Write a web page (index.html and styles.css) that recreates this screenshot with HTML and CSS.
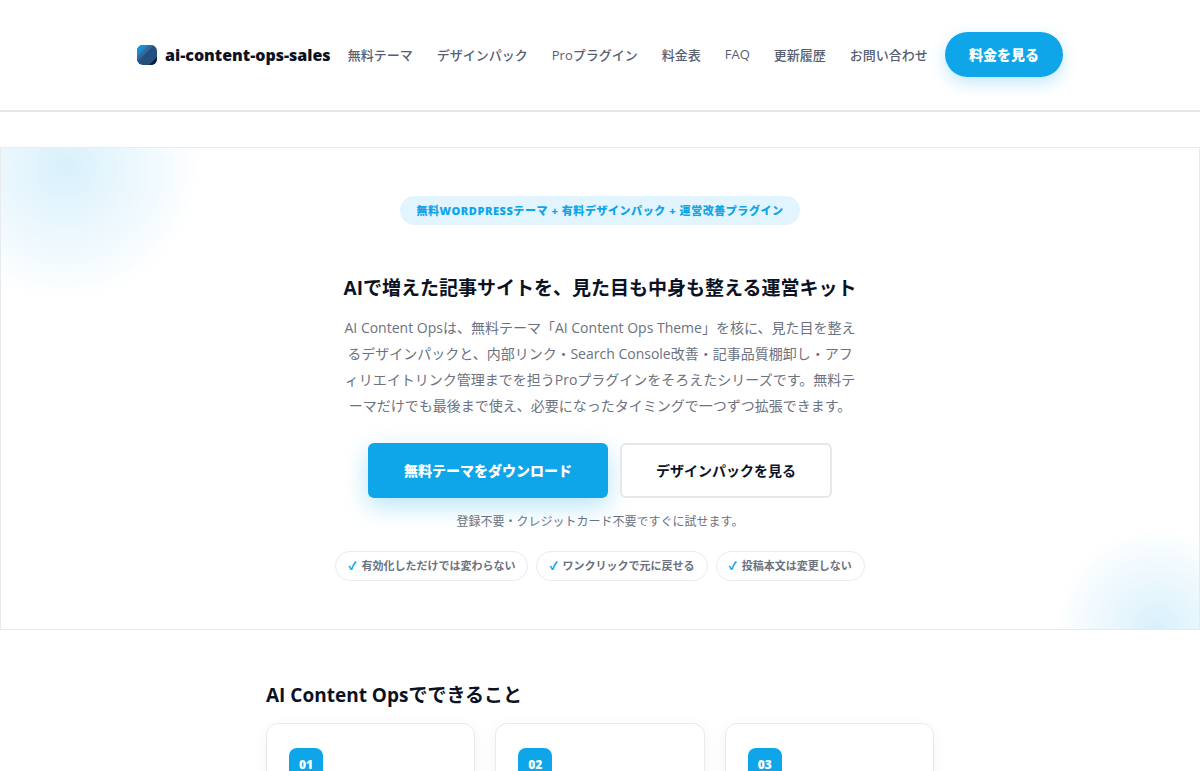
FILE: index.html
```html
<!DOCTYPE html>
<html lang="ja">
<head>
  <meta charset="UTF-8" />
  <meta name="viewport" content="width=device-width, initial-scale=1.0" />
  <title>ai-content-ops-sales</title>
  <link rel="stylesheet" href="styles.css">
</head>
<body>
  <header class="site-header">
    <div class="header-inner">
      <a href="#" class="brand">
        <svg class="brand-icon" viewBox="0 0 20 20" aria-hidden="true">
          <defs>
            <linearGradient id="brand-light" x1="0" y1="0" x2="1" y2="1">
              <stop offset="0" stop-color="#0ea5e9" />
              <stop offset="0.5" stop-color="#1c83c4" />
            </linearGradient>
            <clipPath id="brand-clip"><rect width="20" height="20" rx="6" /></clipPath>
          </defs>
          <g clip-path="url(#brand-clip)">
            <rect width="20" height="20" fill="#24507f" />
            <path d="M0 0h17L0 17z" fill="#35679a" />
            <path d="M0 0h12L0 12z" fill="url(#brand-light)" />
            <path d="M20 12v8h-8z" fill="#0f1d38" />
          </g>
        </svg>
        <span>ai-content-ops-sales</span>
      </a>
      <nav class="nav">
        <a href="#">無料テーマ</a>
        <a href="#">デザインパック</a>
        <a href="#">Proプラグイン</a>
        <a href="#">料金表</a>
        <a href="#">FAQ</a>
        <a href="#">更新履歴</a>
        <a href="#">お問い合わせ</a>
      </nav>
      <a href="#" class="header-cta">料金を見る</a>
    </div>
  </header>

  <main>
    <!-- Hero -->
    <section class="hero">
      <p class="eyebrow">無料WordPressテーマ + 有料デザインパック + 運営改善プラグイン</p>
      <h1 class="title">AIで増えた記事サイトを、見た目も中身も整える運営キット</h1>
      <p class="lead">AI Content Opsは、無料テーマ「AI Content Ops Theme」を核に、見た目を整えるデザインパックと、内部リンク・Search Console改善・記事品質棚卸し・アフィリエイトリンク管理までを担うProプラグインをそろえたシリーズです。無料テーマだけでも最後まで使え、必要になったタイミングで一つずつ拡張できます。</p>
      <div class="actions">
        <a href="#" class="btn btn-primary">無料テーマをダウンロード</a>
        <a href="#" class="btn btn-outline">デザインパックを見る</a>
      </div>
      <p class="note">登録不要・クレジットカード不要ですぐに試せます。</p>
      <ul class="chips">
        <li>有効化しただけでは変わらない</li>
        <li>ワンクリックで元に戻せる</li>
        <li>投稿本文は変更しない</li>
      </ul>
    </section>

    <!-- Features -->
    <section class="features">
      <h2 class="title">AI Content Opsでできること</h2>
      <div class="cards">
        <div class="card"><span class="number">01</span></div>
        <div class="card"><span class="number">02</span></div>
        <div class="card"><span class="number">03</span></div>
      </div>
    </section>
  </main>
</body>
</html>
```
FILE: styles.css
```css
* {
  box-sizing: border-box;
}

body {
  margin: 0;
  font-family: "Open Sans", "Noto Sans CJK JP", sans-serif;
  font-size: 14px;
  color: #0b1224;
  background-color: #fff;
}

a {
  color: inherit;
  text-decoration: none;
}

h1,
h2,
p,
ul {
  margin: 0;
  padding: 0;
}

.site-header {
  padding: 32px 24px 33px;
  border-bottom: 2px solid #e3e7ec;
}

.header-inner {
  display: flex;
  align-items: center;
  justify-content: space-between;
  gap: 16px;
  max-width: 926px;
  margin: 0 auto;
}

.brand {
  display: flex;
  align-items: center;
  gap: 8px;
  font-size: 16px;
  font-weight: 800;
  white-space: nowrap;
}

.brand-icon {
  width: 20px;
  height: 20px;
}

.nav {
  display: flex;
  gap: 24px;
  font-size: 13px;
  font-weight: 500;
  color: #566072;
  white-space: nowrap;
}

.header-cta {
  padding: 0 24px;
  line-height: 45px;
  border-radius: 999px;
  background-color: #0ea5e9;
  box-shadow: 0 6px 16px rgba(14, 165, 233, 0.25);
  color: #fff;
  font-weight: 800;
  white-space: nowrap;
}

.hero {
  display: flex;
  flex-direction: column;
  align-items: center;
  margin-top: 35px;
  padding: 48px 24px;
  border: 1px solid #e8eaee;
  background:
    radial-gradient(circle at 64px 18px, rgba(14, 165, 233, 0.16), rgba(14, 165, 233, 0) 136px),
    radial-gradient(circle at right 42px bottom 0, rgba(14, 165, 233, 0.16), rgba(14, 165, 233, 0) 102px);
  text-align: center;
}

.eyebrow {
  padding: 0 16px;
  border-radius: 999px;
  background-color: #e2f4fd;
  color: #0ea5e9;
  font-size: 11px;
  font-weight: 800;
  line-height: 29px;
  letter-spacing: 0.05em;
  text-transform: uppercase;
}

.title {
  font-size: 19px;
  font-weight: 700;
  line-height: 28px;
}

.hero .title {
  margin-top: 49px;
}

.lead {
  max-width: 517px;
  margin-top: 13px;
  color: #6b7280;
  line-height: 26px;
}

.actions {
  display: flex;
  flex-wrap: wrap;
  justify-content: center;
  gap: 12px;
  margin-top: 24px;
}

.btn {
  padding: 0 34px;
  border: 2px solid #e5e7eb;
  border-radius: 6px;
  line-height: 51px;
  font-weight: 700;
}

.btn-primary {
  border-color: #0ea5e9;
  background-color: #0ea5e9;
  box-shadow: 0 8px 24px rgba(14, 165, 233, 0.3);
  color: #fff;
  font-weight: 800;
}

.btn-outline {
  background-color: #fff;
}

.note {
  margin-top: 14px;
  color: #6b7280;
  font-size: 12px;
  line-height: 20px;
}

.chips {
  display: flex;
  flex-wrap: wrap;
  justify-content: center;
  gap: 8px;
  margin-top: 19px;
  list-style: none;
}

.chips li {
  padding: 0 12px;
  border: 1px solid #e8eaee;
  border-radius: 999px;
  background-color: #fff;
  color: #6b7280;
  font-size: 11px;
  font-weight: 700;
  line-height: 28px;
}

.chips li::before {
  content: "✓";
  margin-right: 5px;
  color: #0ea5e9;
  font-weight: 800;
}

.features {
  max-width: 668px;
  margin: 0 auto;
  padding: 51px 0;
}

.cards {
  display: grid;
  grid-template-columns: repeat(3, 1fr);
  gap: 20px;
  margin-top: 14px;
}

.card {
  min-height: 160px;
  padding: 24px 22px;
  border: 1px solid #e8eaee;
  border-radius: 12px;
  background-color: #fff;
  box-shadow: 0 4px 16px rgba(15, 23, 42, 0.05);
}

.number {
  display: block;
  width: 34px;
  border-radius: 8px;
  background-color: #0ea5e9;
  color: #fff;
  font-size: 12px;
  font-weight: 800;
  line-height: 34px;
  text-align: center;
}
```
